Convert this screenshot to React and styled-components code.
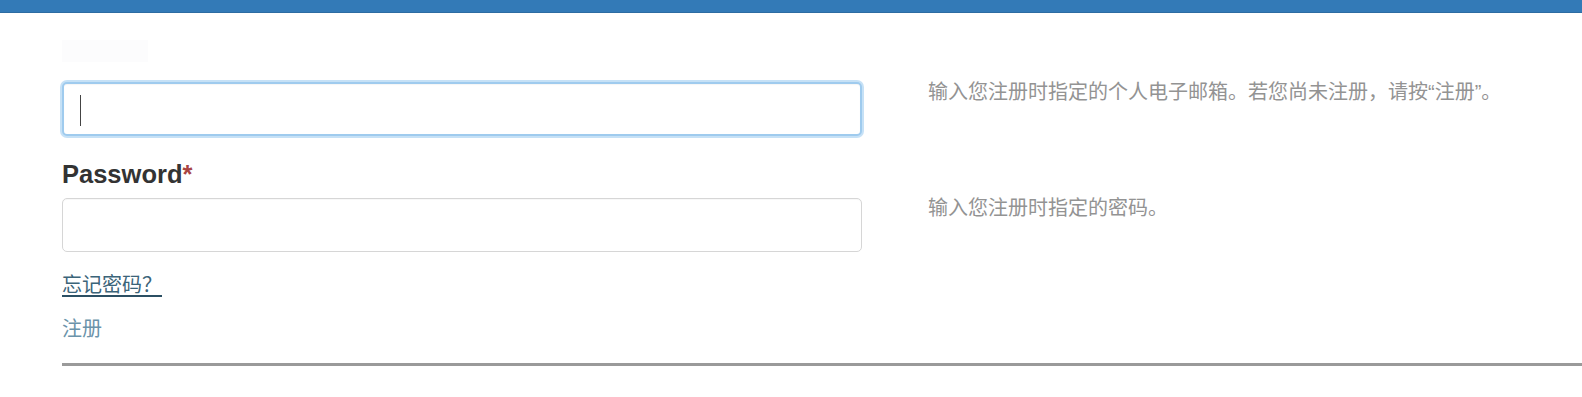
import React from 'react';
import styled, { createGlobalStyle } from 'styled-components';

const GlobalStyle = createGlobalStyle`
    html, body {
        margin: 0;
        padding: 0;
        background: #ffffff;
        font-family: "Liberation Sans", Arial, "Noto Sans CJK SC", sans-serif;
    }
`;

const TopBar = styled.div`
    height: 12px;
    background: #337ab7;
    border-bottom: 1px solid #2d6ca2;
`;

const Main = styled.div`
    padding: 27px 0 30px 62px;
`;

const Ghost = styled.div`
    width: 86px;
    height: 22px;
    background: #fcfcfd;
    margin-bottom: 20px;
`;

const FieldGroup = styled.div`
    display: grid;
    grid-template-columns: 800px 1fr;
    column-gap: 66px;
    align-items: start;
    margin-top: ${({ $gap }) => $gap || 0}px;
`;

const Label = styled.label`
    grid-column: 1;
    display: block;
    font-size: 25.5px;
    line-height: 30px;
    font-weight: 700;
    color: #333333;
    margin-bottom: 9px;
`;

const Required = styled.span`
    color: #a94442;
`;

const InputWrap = styled.div`
    grid-column: 1;
    position: relative;
`;

const Input = styled.input`
    display: block;
    box-sizing: border-box;
    width: 100%;
    height: 54px;
    padding: 6px 16px;
    font-size: 20px;
    color: #555555;
    background: #ffffff;
    border-radius: 5px;
    outline: none;
    border: ${({ $focused }) => ($focused ? '2px solid #9fcbee' : '1px solid #d6d6d6')};
    box-shadow: ${({ $focused }) =>
        $focused
            ? '0 0 0 2px rgba(160, 205, 240, 0.6), inset 0 1px 1px rgba(0, 0, 0, 0.04)'
            : 'inset 0 1px 1px rgba(0, 0, 0, 0.03)'};
`;

const Caret = styled.span`
    position: absolute;
    left: 18px;
    top: 13px;
    width: 1px;
    height: 31px;
    background: #444444;
`;

const Help = styled.div`
    grid-column: 2;
    font-family: "Liberation Sans", "Noto Sans CJK SC", sans-serif;
    font-size: 20px;
    line-height: 20px;
    color: #939393;
    white-space: nowrap;
`;

const Links = styled.div`
    display: flex;
    flex-direction: column;
    align-items: flex-start;
    gap: 16px;
    margin-top: 18px;
`;

const Link = styled.a`
    font-family: "Noto Sans CJK SC", sans-serif;
    font-size: 20px;
    line-height: 28px;
    color: ${({ $muted }) => ($muted ? '#6b93aa' : '#3b6479')};
    text-decoration: ${({ $underline }) => ($underline ? 'underline' : 'none')};
    text-decoration-color: #2b4f63;
    text-underline-offset: 3px;
    cursor: pointer;
`;

const Rule = styled.hr`
    margin: 21px 0 0;
    height: 3px;
    border: none;
    background: #9a9a9a;
`;

export default function App() {
    return (
        <>
            <GlobalStyle />
            <TopBar />
            <Main>
                <Ghost />
                <FieldGroup>
                    <InputWrap>
                        <Input type="email" $focused />
                        <Caret />
                    </InputWrap>
                    <Help>输入您注册时指定的个人电子邮箱。若您尚未注册，请按“注册”。</Help>
                </FieldGroup>
                <FieldGroup $gap={23}>
                    <Label>
                        Password<Required>*</Required>
                    </Label>
                    <InputWrap>
                        <Input type="password" />
                    </InputWrap>
                    <Help>输入您注册时指定的密码。</Help>
                </FieldGroup>
                <Links>
                    <Link $underline>忘记密码？</Link>
                    <Link $muted>注册</Link>
                </Links>
                <Rule />
            </Main>
        </>
    );
}
